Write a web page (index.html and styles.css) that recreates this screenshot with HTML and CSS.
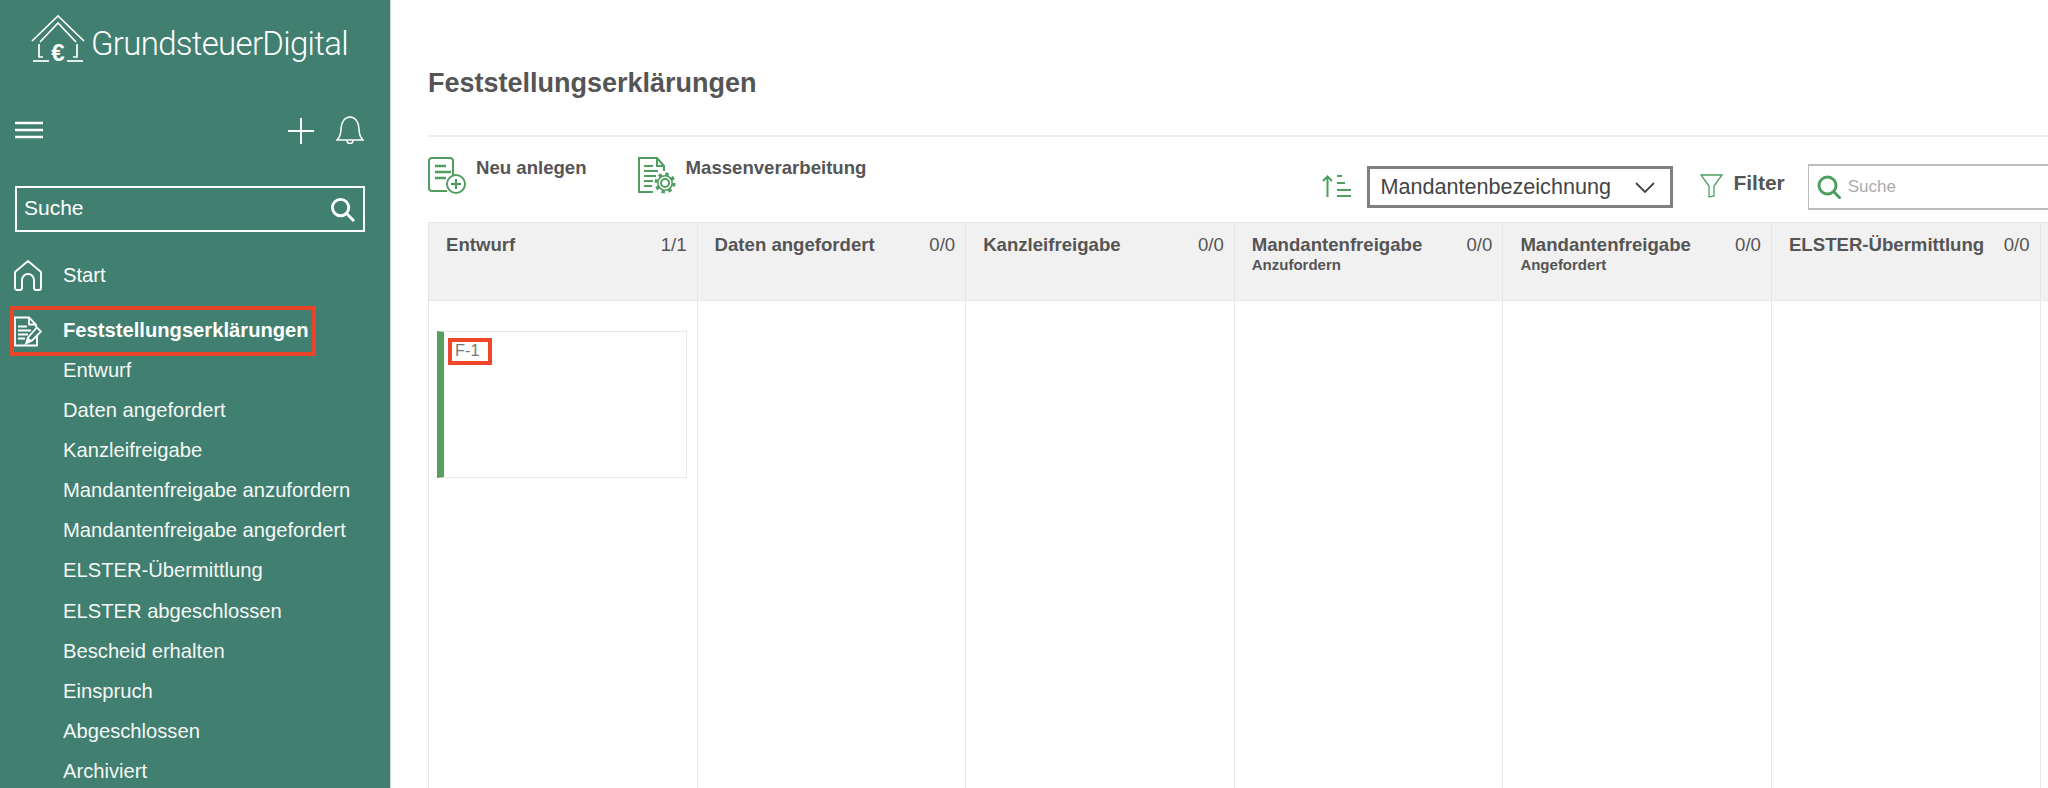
FILE: index.html
```html
<!DOCTYPE html>
<html lang="de">
<head>
<meta charset="utf-8">
<title>Feststellungserklärungen</title>
<link rel="stylesheet" href="styles.css">
</head>
<body>
<div class="app">
  <aside class="sidebar">
    <div class="logo">
      <svg class="logo-icon" viewBox="0 0 54 54" fill="none" stroke="#fff" stroke-width="1.700">
        <path d="M1 26 27 1l26 25"/>
        <path d="M9 27 27 8l18 19"/>
        <path d="M8 29v13h4"/><path d="M46 29v13h-4"/>
        <path d="M2 46h16"/><path d="M36 46h16"/>
        <text x="27" y="46" text-anchor="middle" class="logo-euro" fill="#fff" stroke="none">€</text>
      </svg>
      <span class="logo-text">GrundsteuerDigital</span>
    </div>
    <div class="tools">
      <svg class="ic-menu" viewBox="0 0 28 18" stroke="#fff" stroke-width="2.400"><path d="M0 2h28M0 9h28M0 16h28"/></svg>
      <svg class="ic-plus" viewBox="0 0 26 26" stroke="#fff" stroke-width="2"><path d="M13 0v26M0 13h26"/></svg>
      <svg class="ic-bell" viewBox="0 0 28 28" fill="none" stroke="#fff" stroke-width="1.500"><path d="M1 24c3-3 4-6 4-11C5 6 9 1 14 1s9 5 9 12c0 5 1 8 4 11z"/><path d="M11 24.500a3 3 0 0 0 6 0"/></svg>
    </div>
    <div class="side-search">
      <span>Suche</span>
      <svg class="ic-find" viewBox="0 0 26 26" fill="none" stroke="#fff" stroke-width="3"><circle cx="11" cy="11" r="8.500"/><path d="m17 17 8 8"/></svg>
    </div>
    <nav class="nav">
      <div class="nav-top">
        <svg class="ic-nav" viewBox="0 0 28 31" fill="none" stroke="#fff" stroke-width="1.900" stroke-linejoin="round"><path d="M1 12 14 1l13 11v16a2 2 0 0 1-2 2h-3a2 2 0 0 1-2-2v-8a6 6 0 0 0-12 0v8a2 2 0 0 1-2 2H3a2 2 0 0 1-2-2z"/></svg>
        <span>Start</span>
      </div>
      <div class="nav-top active">
        <svg class="ic-nav" viewBox="0 0 28 30" fill="none" stroke="#fff" stroke-width="1.800"><path d="M23 19v10H1V1h14l7 7v3M15 1v7h7"/><path d="M4 10h9M4 14h13M4 18h10M4 22h7" stroke-width="2"/><path d="m12 27 2-6 9-10 4 4-9 9z" fill="#417f70"/><path d="m12 27 2-6 4 3z" fill="#fff" stroke="none"/></svg>
        <span>Feststellungserklärungen</span>
      </div>
      <ul class="nav-sub">
        <li>Entwurf</li>
        <li>Daten angefordert</li>
        <li>Kanzleifreigabe</li>
        <li>Mandantenfreigabe anzufordern</li>
        <li>Mandantenfreigabe angefordert</li>
        <li>ELSTER-Übermittlung</li>
        <li>ELSTER abgeschlossen</li>
        <li>Bescheid erhalten</li>
        <li>Einspruch</li>
        <li>Abgeschlossen</li>
        <li>Archiviert</li>
      </ul>
    </nav>
  </aside>
  <main class="main">
    <h1 class="title">Feststellungserklärungen</h1>
    <div class="toolbar">
      <div class="action act-new">
        <svg class="ic-act" viewBox="0 0 38 37" fill="none" stroke="#4f9e5f" stroke-width="2"><path d="M25 19V4a3 3 0 0 0-3-3H4a3 3 0 0 0-3 3v27a3 3 0 0 0 3 3h15"/><path d="M7 9h11M7 15h16M7 21h11" stroke-width="2.400"/><circle cx="28" cy="27" r="9"/><path d="M28 22v10M23 27h10"/></svg>
        <span>Neu anlegen</span>
      </div>
      <div class="action act-mass">
        <svg class="ic-act" viewBox="0 0 38 37" fill="none" stroke="#4f9e5f" stroke-width="2"><path d="M26 14V9l-7-8H1v34h14"/><path d="M19 1v8h7"/><path d="M6 9h9M6 14h14M6 19h12M6 24h9M6 29h8" stroke-width="1.800"/><circle cx="27" cy="26" r="4"/><circle cx="27" cy="26" r="7.200" stroke-width="1.600"/><circle cx="27" cy="26" r="9" stroke-width="3" stroke-dasharray="3.500 3.570"/></svg>
        <span>Massenverarbeitung</span>
      </div>
      <div class="controls">
        <svg class="ic-sort" viewBox="0 0 30 22" fill="none" stroke="#4f9e5f" stroke-width="2"><path d="M5.500 22V1.500M1 6l4.500-4.500L10 6"/><path d="M15 1h5M15 8h8M15 15h14M15 21h14"/></svg>
        <div class="select">
          <span>Mandantenbezeichnung</span>
          <svg class="ic-chev" viewBox="0 0 20 11" fill="none" stroke="#444" stroke-width="1.800"><path d="m1 1 9 9 9-9"/></svg>
        </div>
        <div class="filter">
          <svg class="ic-funnel" viewBox="0 0 23 24" fill="none" stroke="#4f9e5f" stroke-width="1.300"><path d="M1 1h21l-8 11v10l-5 1V12z"/></svg>
          <span>Filter</span>
        </div>
        <div class="search">
          <svg class="ic-glass" viewBox="0 0 24 24" fill="none" stroke="#4f9e5f" stroke-width="3"><circle cx="10.500" cy="10.500" r="8.500"/><path d="m16.500 16.500 7 7"/></svg>
          <span>Suche</span>
        </div>
      </div>
    </div>
    <section class="board">
      <div class="col">
        <header class="col-head"><div><b>Entwurf</b></div><span>1/1</span></header>
        <div class="col-body">
          <article class="card"><span class="card-id">F-1</span></article>
        </div>
      </div>
      <div class="col">
        <header class="col-head"><div><b>Daten angefordert</b></div><span>0/0</span></header>
        <div class="col-body"></div>
      </div>
      <div class="col">
        <header class="col-head"><div><b>Kanzleifreigabe</b></div><span>0/0</span></header>
        <div class="col-body"></div>
      </div>
      <div class="col">
        <header class="col-head"><div><b>Mandantenfreigabe</b><small>Anzufordern</small></div><span>0/0</span></header>
        <div class="col-body"></div>
      </div>
      <div class="col">
        <header class="col-head"><div><b>Mandantenfreigabe</b><small>Angefordert</small></div><span>0/0</span></header>
        <div class="col-body"></div>
      </div>
      <div class="col">
        <header class="col-head"><div><b>ELSTER-Übermittlung</b></div><span>0/0</span></header>
        <div class="col-body"></div>
      </div>
      <div class="col">
        <header class="col-head"></header>
        <div class="col-body"></div>
      </div>
    </section>
  </main>
</div>
</body>
</html>
```
FILE: styles.css
```css
* { box-sizing: border-box; }
html, body { margin: 0; height: 100%; overflow: hidden; }
body { font-family: "Liberation Sans", Arial, sans-serif; color: #555; background: #fff; }
.app { display: flex; height: 788px; }

.sidebar { flex: 0 0 391px; height: 788px; overflow: hidden; background: #417f70; border-right: 1px solid #c9d6d2; color: #fff; }
.logo { display: flex; align-items: flex-start; height: 121px; padding: 15px 0 0 31px; }
.logo-icon { width: 54px; height: 54px; flex: none; }
.logo-euro { font: 700 24px "Liberation Sans", sans-serif; }
.logo-text { margin: 8px 0 0 6px; font: 300 33px/42px Roboto, sans-serif; letter-spacing: -0.700px; white-space: nowrap; }
.tools { display: flex; align-items: flex-start; height: 65px; padding: 0 26px 0 15px; }
.ic-menu { width: 28px; height: 18px; }
.ic-plus { width: 26px; height: 26px; margin: -3px 0 0 auto; }
.ic-bell { width: 28px; height: 28px; margin: -5px 0 0 22px; }
.side-search { display: flex; align-items: center; justify-content: space-between; width: 350px; height: 46px; margin-left: 15px; padding: 0 8px 0 7px; border: 2.500px solid #fff; font-size: 21px; }
.side-search span { margin-top: -2px; }
.ic-find { width: 25px; height: 25px; }

.nav { margin-top: 23px; }
.nav-top { display: flex; align-items: center; width: 306px; height: 40px; margin: 0 0 11px 10px; padding-left: 4px; font-size: 20.200px; }
.nav-top span { margin-left: 21px; }
.ic-nav { width: 28px; height: 31px; flex: none; }
.active { height: 50px; margin-bottom: -6px; border: 4px solid #e8452a; padding-left: 0; font-weight: 700; white-space: nowrap; }
.active span { margin-top: -2px; }
.nav-sub { list-style: none; margin: 0; padding: 0 0 0 63px; font-size: 20.200px; line-height: 40.100px; white-space: nowrap; color: #f4f8f6; }

.main { flex: 1; min-width: 0; height: 788px; overflow: hidden; padding-left: 37px; }
.title { margin: 0; height: 137px; padding-top: 67px; border-bottom: 2px solid #eee; font-size: 27px; line-height: 32px; font-weight: 700; color: #555; }
.toolbar { display: flex; align-items: flex-start; height: 85px; white-space: nowrap; }
.action { display: flex; align-items: flex-start; font-size: 18.600px; font-weight: 700; color: #555; padding-top: 20px; }
.action span { margin: 0 0 0 10px; line-height: 22px; }
.ic-act { width: 38px; height: 37px; flex: none; }
.act-mass { margin-left: 51px; }
.controls { display: flex; align-items: flex-start; margin-left: 456px; flex: none; }
.ic-sort { width: 30px; height: 22px; margin-top: 38px; flex: none; }
.select { display: flex; align-items: center; justify-content: space-between; width: 306px; height: 42px; margin: 29px 0 0 15px; padding: 0 15px 0 10px; border: 3px solid #808080; font-size: 21.600px; color: #444; }
.ic-chev { width: 20px; height: 11px; }
.filter { display: flex; align-items: flex-start; margin: 37px 0 0 27px; font-size: 21px; font-weight: 700; color: #555; }
.filter span { margin: -3px 0 0 10px; line-height: 24px; }
.ic-funnel { width: 23px; height: 24px; }
.search { display: flex; align-items: center; width: 400px; height: 46px; margin: 27px 0 0 23px; padding-left: 8px; border: 1px solid #bbb; border-width: 2px 2px 2px 1px; font-size: 17px; color: #aaa; flex: none; }
.search span { margin-left: 7px; }
.ic-glass { width: 24px; height: 24px; }

.board { display: flex; width: 1900px; height: 566px; border-left: 1px solid #e6e6e6; }
.col { flex: 0 0 268.600px; display: flex; flex-direction: column; border-right: 1px solid #e6e6e6; }
.col-head { display: flex; justify-content: space-between; height: 79px; padding: 10px 10px 0 17px; background: #f1f1f1; border-top: 1px solid #e6e6e6; border-bottom: 1px solid #e6e6e6; font-size: 18.600px; line-height: 24px; color: #555; }
.col-head b { display: block; white-space: nowrap; }
.col-head small { display: block; font-size: 15px; font-weight: 700; line-height: 16px; }
.col-head > span { white-space: nowrap; margin-left: 10px; }
.col-body { flex: 1; padding: 30px 10px 0 8px; }
.card { height: 147px; padding: 6px 0 0 4px; border: 1px solid #e8e8e8; border-left: 7px solid #55a061; }
.card-id { display: block; width: 44px; height: 27px; border: 4px solid #f0472a; font-size: 16.500px; line-height: 17px; color: #777; padding-left: 3px; }
```
